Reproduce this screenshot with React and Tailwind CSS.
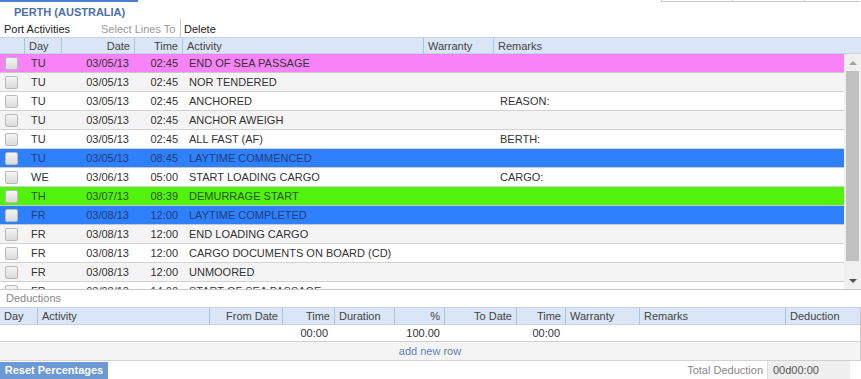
import React from "react";

const rows = [
  { day: "TU", date: "03/05/13", time: "02:45", act: "END OF SEA PASSAGE", rem: "", tone: "pink" },
  { day: "TU", date: "03/05/13", time: "02:45", act: "NOR TENDERED", rem: "" },
  { day: "TU", date: "03/05/13", time: "02:45", act: "ANCHORED", rem: "REASON:" },
  { day: "TU", date: "03/05/13", time: "02:45", act: "ANCHOR AWEIGH", rem: "" },
  { day: "TU", date: "03/05/13", time: "02:45", act: "ALL FAST (AF)", rem: "BERTH:" },
  { day: "TU", date: "03/05/13", time: "08:45", act: "LAYTIME COMMENCED", rem: "", tone: "blue" },
  { day: "WE", date: "03/06/13", time: "05:00", act: "START LOADING CARGO", rem: "CARGO:" },
  { day: "TH", date: "03/07/13", time: "08:39", act: "DEMURRAGE START", rem: "", tone: "green" },
  { day: "FR", date: "03/08/13", time: "12:00", act: "LAYTIME COMPLETED", rem: "", tone: "blue" },
  { day: "FR", date: "03/08/13", time: "12:00", act: "END LOADING CARGO", rem: "" },
  { day: "FR", date: "03/08/13", time: "12:00", act: "CARGO DOCUMENTS ON BOARD (CD)", rem: "" },
  { day: "FR", date: "03/08/13", time: "12:00", act: "UNMOORED", rem: "" },
  { day: "FR", date: "03/08/13", time: "14:00", act: "START OF SEA PASSAGE", rem: "" },
];

const toneCls = {
  pink: "bg-[#f883f8] text-[#333]",
  blue: "bg-[#2f80fd] text-[#1f3f78]",
  green: "bg-[#52f20c] text-[#2a5216]",
};

const mainCols = "grid grid-cols-[25px_37px_73px_48px_241px_70px_1fr]";
const dedCols = "grid grid-cols-[38px_172px_73px_52px_60px_50px_72px_49px_74px_146px_1fr]";

function Check() {
  return (
    <div className="ml-[5px] w-[13px] h-[13px] rounded-[2px] border border-[#b9b9b9] bg-gradient-to-b from-[#f6f6f6] to-[#dadada]" />
  );
}

function HeadCell({ children, right, last }) {
  return (
    <div
      className={`h-full flex items-center px-[4px] ${right ? "justify-end" : ""} ${
        last ? "" : "border-r border-[#aec3de]"
      }`}
    >
      {children}
    </div>
  );
}

export default function App() {
  return (
    <div
      className="w-[861px] h-[379px] bg-white text-[11px] text-[#333] overflow-hidden"
      style={{ fontFamily: '"Liberation Sans", Arial, sans-serif' }}
    >
      {/* tab strip */}
      <div className="flex h-[3px]">
        <div className="w-[138px] h-[2px] bg-[#4a7fd0]" />
        <div className="flex-1" />
        <div className="flex mr-[1px]">
          <div className="w-[71px] h-[2px] border-l border-b border-[#c8c8c8]" />
          <div className="w-[72px] h-[2px] border-l border-b border-[#c8c8c8]" />
          <div className="w-[56px] h-[2px] border-l border-b border-[#c8c8c8]" />
        </div>
      </div>

      <div className="h-[18px] pl-[14px] flex items-center font-bold text-[#4a6fad]">PERTH (AUSTRALIA)</div>

      <div className="h-[16px] flex items-center">
        <span className="pl-[4px] w-[101px] text-[#222]">Port Activities</span>
        <span className="w-[79px] text-[#999]">Select Lines To</span>
        <span className="h-[18px] border-l border-[#c8c8c8] -mt-[2px]" />
        <span className="pl-[3px] text-[#222]">Delete</span>
      </div>

      {/* main grid */}
      <div className="border-b border-[#c9c9c9]">
        <div className={`${mainCols} h-[17px] bg-[#dae6f5] border-t border-b border-[#c3d3e8] text-[#444]`}>
          <HeadCell />
          <HeadCell>Day</HeadCell>
          <HeadCell right>Date</HeadCell>
          <HeadCell right>Time</HeadCell>
          <HeadCell>Activity</HeadCell>
          <HeadCell>Warranty</HeadCell>
          <HeadCell last>Remarks</HeadCell>
        </div>
        <div className="flex h-[235px]">
          <div className="flex-1 overflow-hidden">
            {rows.map((r, i) => (
              <div
                key={i}
                className={`${mainCols} h-[19px] items-center border-b ${
                  r.tone
                    ? `${toneCls[r.tone]} border-[#c9c9c9]`
                    : `${i % 2 ? "bg-[#f4f4f4]" : "bg-white"} border-[#d2d2d2]`
                }`}
              >
                <Check />
                <div className="pl-[6px]">{r.day}</div>
                <div className="text-right pr-[6px]">{r.date}</div>
                <div className="text-right pr-[5px]">{r.time}</div>
                <div className="pl-[6px]">{r.act}</div>
                <div />
                <div className="pl-[6px]">{r.rem}</div>
              </div>
            ))}
          </div>
          <div className="w-[17px] bg-[#f0f0f0] flex flex-col items-center">
            <div className="h-[17px] flex items-center justify-center">
              <div className="w-0 h-0 border-l-[4px] border-r-[4px] border-b-[4px] border-l-transparent border-r-transparent border-b-[#a3a3a3]" />
            </div>
            <div className="w-[13px] h-[190px] bg-[#c1c1c1]" />
            <div className="flex-1" />
            <div className="h-[17px] flex items-center justify-center">
              <div className="w-0 h-0 border-l-[4px] border-r-[4px] border-t-[4px] border-l-transparent border-r-transparent border-t-[#505050]" />
            </div>
          </div>
        </div>
      </div>

      <div className="h-[17px] pl-[6px] flex items-center text-[#888]">Deductions</div>

      {/* deductions grid */}
      <div className="border-r border-[#c9c9c9]">
        <div className={`${dedCols} h-[18px] bg-[#dae6f5] border-t border-b border-[#c3d3e8] text-[#444]`}>
          <HeadCell>Day</HeadCell>
          <HeadCell>Activity</HeadCell>
          <HeadCell right>From Date</HeadCell>
          <HeadCell right>Time</HeadCell>
          <HeadCell>Duration</HeadCell>
          <HeadCell right>%</HeadCell>
          <HeadCell right>To Date</HeadCell>
          <HeadCell right>Time</HeadCell>
          <HeadCell>Warranty</HeadCell>
          <HeadCell>Remarks</HeadCell>
          <HeadCell last>Deduction</HeadCell>
        </div>
        <div className={`${dedCols} h-[17px] items-center border-b border-[#d2d2d2]`}>
          <div />
          <div />
          <div />
          <div className="text-right pr-[7px]">00:00</div>
          <div />
          <div className="text-right pr-[5px]">100.00</div>
          <div />
          <div className="text-right pr-[6px]">00:00</div>
          <div />
          <div />
          <div />
        </div>
        <div className="h-[19px] flex items-center justify-center bg-[#f4f4f4] border-b border-[#d2d2d2] text-[#5b82c0]">
          add new row
        </div>
      </div>

      <div className="flex items-center h-[18px]">
        <button className="w-[108px] h-[17px] mt-[1px] bg-[#6c98d4] text-white font-bold text-[11px] flex items-center justify-center">
          Reset Percentages
        </button>
        <div className="flex-1" />
        <span className="text-[#888] pr-[4px]">Total Deduction</span>
        <div className="w-[83px] h-[18px] mr-[11px] bg-[#efefef] border-l border-[#dcdcdc] pl-[5px] flex items-center text-[#555]">
          00d00:00
        </div>
      </div>
    </div>
  );
}
